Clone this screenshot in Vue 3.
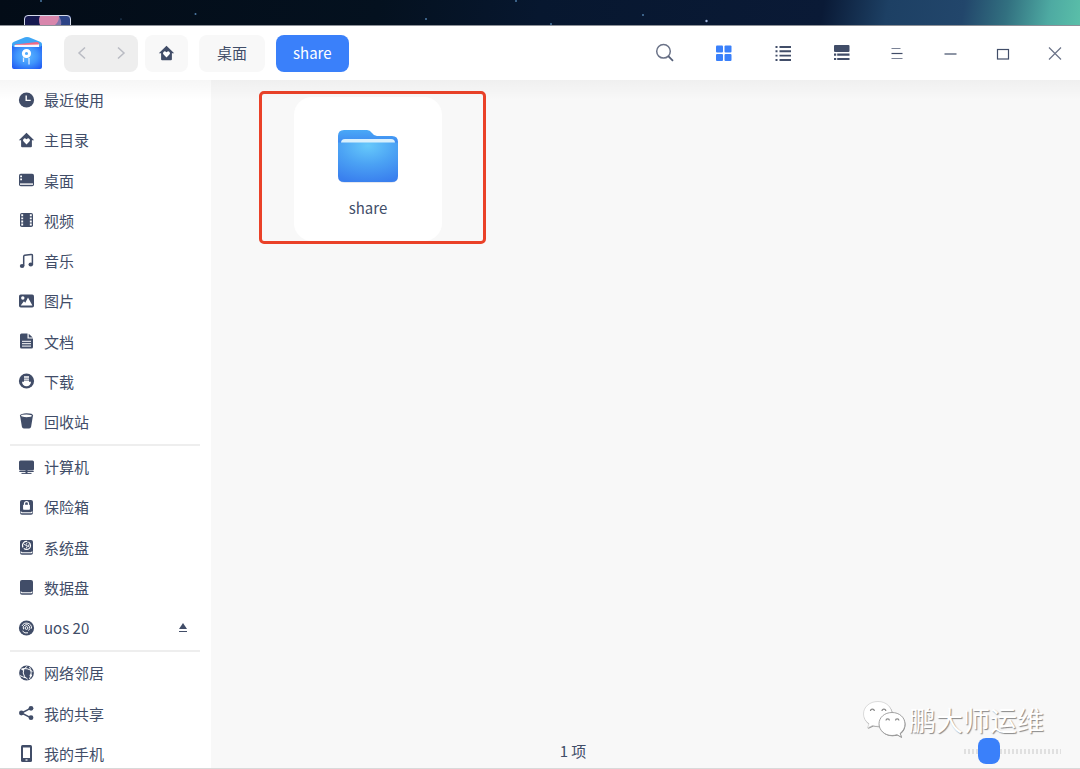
<script setup>
import { ref } from 'vue'

const zoomLevel = ref(19)

const places = [
  { icon: 'clock', label: '最近使用' },
  { icon: 'home', label: '主目录' },
  { icon: 'desktop', label: '桌面' },
  { icon: 'video', label: '视频' },
  { icon: 'music', label: '音乐' },
  { icon: 'picture', label: '图片' },
  { icon: 'document', label: '文档' },
  { icon: 'download', label: '下载' },
  { icon: 'trash', label: '回收站' },
  { separator: true },
  { icon: 'computer', label: '计算机' },
  { icon: 'vault', label: '保险箱' },
  { icon: 'system', label: '系统盘' },
  { icon: 'disk', label: '数据盘' },
  { icon: 'disc', label: 'uos 20', eject: true },
  { separator: true },
  { icon: 'network', label: '网络邻居' },
  { icon: 'share', label: '我的共享' },
  { icon: 'phone', label: '我的手机' },
]

const d = '#414d68'
const homeArt = `<path fill="${d}" d="M8.500 .8 16.200 8.200h-2.300v6a1 1 0 0 1-1 1H4.100a1 1 0 0 1-1-1v-6H.8z"/><path fill="#fff" d="M8.500 12.400 5.600 9.500a1.800 1.800 0 0 1 2.500-2.600l.4.400.4-.4a1.800 1.800 0 0 1 2.500 2.600z"/>`
const diskBase = `<rect x="2" y="1" width="13" height="14.700" rx="2" fill="${d}"/><path d="M3 12.500v.3a1 1 0 0 0 1 1h9a1 1 0 0 0 1-1v-.3" fill="none" stroke="#fff" stroke-width="1.100"/>`

const art = {
  clock: `<circle cx="8.500" cy="8" r="7.600" fill="${d}"/><path d="M8.200 3.400v5h4.500" fill="none" stroke="#fff" stroke-width="1.400"/>`,
  home: homeArt,
  desktop: `<rect x="1" y="1.700" width="15" height="12.600" rx="1.800" fill="${d}"/><path d="M2 12.100h13" stroke="#fff" stroke-width="1.400"/><path d="M2.200 4.400h1.800M2.200 7.400h1.800" stroke="#fff" stroke-width="1.600"/>`,
  video: `<rect x="2" y="1" width="13" height="14" rx="1.800" fill="${d}"/><path d="M4.200 2.300v12M12.800 2.300v12" stroke="#fff" stroke-width="1.900" stroke-dasharray="1.900 1.200"/>`,
  music: `<ellipse cx="4.100" cy="13" rx="2.300" ry="2" fill="${d}"/><ellipse cx="12.800" cy="11.500" rx="2.300" ry="2" fill="${d}"/><path d="M5.700 13V3.500q0-1 1-1.200l6.300-.8q1.400-.1 1.400 1v9" fill="none" stroke="${d}" stroke-width="1.500"/>`,
  picture: `<rect x="1" y="1.500" width="15" height="13" rx="1.800" fill="${d}"/><circle cx="4.800" cy="5" r="1.700" fill="#fff"/><path fill="#fff" d="m2.700 12.400 3.200-4.200 1.400 1.500 2.700-5.200L14.400 12.400z"/>`,
  document: `<path fill="${d}" d="M3.500 .6h6v4.900H15v8.400a1.500 1.500 0 0 1-1.500 1.500h-10A1.500 1.500 0 0 1 2 13.900V2.100A1.500 1.500 0 0 1 3.500 .6zM10.700 .8l4 3.700h-4z"/><path d="M4 8.300h9M4 10.700h9M4 13.100h9" stroke="#fff" stroke-width="1"/>`,
  download: `<circle cx="8.500" cy="8" r="7.600" fill="${d}"/><path d="M6 4h5M6 6.200h5" stroke="#fff" stroke-width="1.300"/><path fill="#fff" d="M6 7.600h5v1.200h2a4.500 4.500 0 0 1-9 0h2z"/>`,
  trash: `<ellipse cx="8.500" cy="2.800" rx="6.100" ry="1.900" fill="none" stroke="${d}" stroke-width="1.100"/><path fill="${d}" d="M2.200 3.600Q8.500 6.500 14.800 3.600l-1.700 10.200q-.3 1.700-2 1.700H5.900q-1.700 0-2-1.700z"/>`,
  computer: `<rect x="1" y="1.500" width="15" height="10" rx="1.500" fill="${d}"/><path d="M1.300 12.500h14.400M3.500 14.400h10" stroke="${d}" stroke-width="1"/><path d="M7.500 11h2v3.500h-2z" fill="${d}"/>`,
  vault: diskBase + `<path d="M5.700 6.300v3.800h5.600V6.300z" fill="#fff" stroke="#fff" stroke-width="1.200" stroke-linejoin="round"/><path d="M6.500 6.300V4.700a2 2 0 0 1 4 0v1.600" fill="none" stroke="#fff" stroke-width="1.200"/>`,
  system: diskBase + `<circle cx="8.500" cy="6.400" r="4" fill="none" stroke="#fff" stroke-width="1.200" stroke-dasharray="9 1.200"/><path d="M9.300 3.600 7.500 6.300l2 .5-1.400 2.700M5.800 4.700l1 1.200M11 5.300l-.7 2.700" fill="none" stroke="#fff" stroke-width=".9"/>`,
  disk: diskBase,
  disc: `<circle cx="8.500" cy="8" r="7.600" fill="${d}"/><circle cx="8.500" cy="8" r="1.400" fill="none" stroke="#fff" stroke-width="1"/><path d="M4 6A5 5 0 0 1 13.500 8.500M5.500 9.300a3.300 3.300 0 1 1 5 1.300M4.500 11a4.900 4.900 0 0 0 5.500 1.800" fill="none" stroke="#fff" stroke-width="1"/>`,
  network: `<circle cx="8.500" cy="8" r="7.400" fill="${d}"/><path d="M9.300 1.200Q4.500 3.600 5.200 8t4.500 6.200M3 4.200q6.700-2 11.500 2.500M11.500 2q3.300 5.300 0 12M1.800 10.600q3.200 1.200 5.700 2.400" fill="none" stroke="#fff" stroke-width="1"/><circle cx="5" cy="4.500" r="1.100" fill="#fff"/><circle cx="12.800" cy="10.500" r="1.200" fill="#fff"/>`,
  share: `<path d="M13 3.200 3.500 8l9.500 4.800" fill="none" stroke="${d}" stroke-width="1.500"/><circle cx="13" cy="3.300" r="2.400" fill="${d}"/><circle cx="3.400" cy="8" r="2.400" fill="${d}"/><circle cx="13" cy="12.700" r="2.400" fill="${d}"/>`,
  phone: `<rect x="3" y="0" width="11" height="17" rx="1.500" fill="${d}"/><rect x="5" y="2.500" width="7" height="10.500" fill="#fff"/><path d="M7.500 15h2" stroke="#fff" stroke-width="1.200"/>`,
}

const views = [
  { label: '搜索', art: `<circle cx="8.500" cy="8.300" r="6.800" fill="none" stroke="#6b7388" stroke-width="1.500"/><path d="m13.300 13.200 4.700 4.600" stroke="#555f78" stroke-width="1.800"/>` },
  { label: '图标视图', art: `<g fill="#3a80fa"><rect x="2" y="2.500" width="7" height="7" rx="1"/><rect x="10.500" y="2.500" width="7" height="7" rx="1"/><rect x="2" y="11" width="7" height="7" rx="1"/><rect x="10.500" y="11" width="7" height="7" rx="1"/></g>` },
  { label: '列表视图', art: `<path d="M2.500 4h2M6.500 4h11.500M2.500 8.300h2M6.500 8.300h11.500M2.500 12.600h2M6.500 12.600h11.500M2.500 17h2M6.500 17h11.500" stroke="${d}" stroke-width="1.900"/>` },
  { label: '分栏视图', art: `<rect x="2" y="2" width="15.500" height="7" rx="1" fill="${d}"/><path d="M2 11.700h2.200M5.200 11.700h12.300M2 16h2.200M5.200 16h12.300" stroke="${d}" stroke-width="2.200"/>` },
]

const controls = [
  { label: '菜单', art: `<path d="M3.500 5.500h9M3.500 15.500h11" stroke="#7a8296" stroke-width="1.200"/><path d="M3.500 10.500h11" stroke="${d}" stroke-width="1.200"/>` },
  { label: '最小化', art: `<path d="M4.500 11h12" stroke="${d}" stroke-width="1.200"/>` },
  { label: '最大化', art: `<rect x="5.500" y="6.500" width="11" height="9.500" fill="none" stroke="${d}" stroke-width="1.200"/>` },
  { label: '关闭', art: `<path d="m5 4.500 12 12M17 4.500l-12 12" stroke="#6b7388" stroke-width="1.200"/>` },
]
</script>

<template>
  <div class="screen">
    <div class="wallpaper">
      <svg class="stars" width="720" height="25" viewBox="0 0 720 25" aria-hidden="true">
        <g fill="#4d7aa5">
          <circle cx="41" cy="1" r="1" /><circle cx="195.500" cy="14" r="1" /><circle cx="121" cy="19" r=".6" />
          <circle cx="426" cy="19" r="1" /><circle cx="516" cy="1" r="1" /><circle cx="551" cy="24" r="1" />
          <circle cx="643" cy="15" r="1" /><circle cx="706.500" cy="21" r="1.200" fill="#a0b5dd" />
        </g>
      </svg>
      <svg class="thumb" width="47" height="10" viewBox="0 0 47 10" aria-hidden="true">
        <path d="M0 10V4a4 4 0 0 1 4-4h39a4 4 0 0 1 4 4v6z" fill="#16194f" />
        <path d="M30 0h13a4 4 0 0 1 4 4v6H30z" fill="#2c4386" />
        <path d="M30 1h5q3 5 2 9h-7z" fill="#8277ad" />
        <path d="M16 1h19q0 6-4 9H16q-2-5 0-9z" fill="#d886ac" />
        <path d="M.5 10V4A3.500 3.500 0 0 1 4 .5h39A3.500 3.500 0 0 1 46.500 4v6" fill="none" stroke="#d5dbea" />
      </svg>
    </div>

    <header class="titlebar">
      <svg class="logo" width="32" height="34" viewBox="0 0 32 34" aria-hidden="true">
        <defs>
          <radialGradient id="bag" cx=".5" cy=".45" r=".7">
            <stop offset="0" stop-color="#5cb8ff" /><stop offset=".5" stop-color="#4096fc" /><stop offset="1" stop-color="#1f58f2" />
          </radialGradient>
        </defs>
        <path d="M1 12V8q0-1.500 2-2.300L14 1.300q2-.7 4 0L29 5.700Q31 6.500 31 8v4z" fill="#3fa6f6" />
        <path d="m4 8.500 22-2.500q2 0 2.500 3L4 11z" fill="#f16a86" />
        <path d="M1 9.500 3 11h26l2-1.500V31a2 2 0 0 1-2 2H3a2 2 0 0 1-2-2z" fill="url(#bag)" />
        <path d="m3.500 9 24.500-1v3H3.500z" fill="#f6f8ff" />
        <path d="m6 8.800 20-2 2 1.700z" fill="#f16a86" />
        <circle cx="15.500" cy="17.500" r="3.100" fill="none" stroke="#fff" stroke-width="3" />
        <path d="M12.500 21.500v4.500M18 22v6.500" stroke="#dcecff" stroke-width="1.300" />
      </svg>
      <div class="history">
        <button type="button" aria-label="后退">
          <svg width="20" height="20" viewBox="0 0 20 20"><path d="m12 4.500-6 5.500 6 5.500" fill="none" stroke="#b9bbc3" stroke-width="1.500" /></svg>
        </button>
        <button type="button" aria-label="前进">
          <svg width="20" height="20" viewBox="0 0 20 20"><path d="m8 4.500 6 5.500-6 5.500" fill="none" stroke="#b9bbc3" stroke-width="1.500" /></svg>
        </button>
      </div>
      <nav class="crumbs" aria-label="路径">
        <button type="button" class="crumb home" aria-label="主目录"><svg width="17" height="17" viewBox="0 0 17 17" v-html="art.home" /></button>
        <button type="button" class="crumb">桌面</button>
        <button type="button" class="crumb current">share</button>
      </nav>
      <div class="views">
        <button v-for="v in views" :key="v.label" type="button" :aria-label="v.label">
          <svg width="20" height="20" viewBox="0 0 20 20" v-html="v.art" />
        </button>
      </div>
      <div class="controls">
        <button v-for="c in controls" :key="c.label" type="button" :aria-label="c.label">
          <svg width="20" height="20" viewBox="0 0 20 20" v-html="c.art" />
        </button>
      </div>
    </header>

    <div class="body">
      <aside class="sidebar">
        <ul>
          <template v-for="(p, i) in places" :key="i">
            <li v-if="p.separator" class="separator" role="separator"></li>
            <li v-else class="place">
              <a href="#">
                <svg width="17" height="17" viewBox="0 0 17 17" aria-hidden="true" v-html="art[p.icon]" />
                <span>{{ p.label }}</span>
              </a>
              <button v-if="p.eject" type="button" class="eject" aria-label="弹出">
                <svg width="10" height="10" viewBox="0 0 10 10"><path d="M5 0 9 6H1z" fill="#414d68" /><path d="M1 8.500h8" stroke="#414d68" /></svg>
              </button>
            </li>
          </template>
        </ul>
      </aside>

      <main class="content">
        <div class="files">
          <div class="highlight">
            <button type="button" class="file">
              <svg width="62" height="56" viewBox="0 0 62 56" aria-hidden="true">
                <defs>
                  <radialGradient id="front" cx=".5" cy=".08" r=".95">
                    <stop offset="0" stop-color="#66c9fb" /><stop offset=".5" stop-color="#4ba2f4" /><stop offset="1" stop-color="#397fee" />
                  </radialGradient>
                  <linearGradient id="back" x2="0" y2="1">
                    <stop offset="0" stop-color="#4aa9f7" /><stop offset=".4" stop-color="#3b80ee" />
                  </linearGradient>
                </defs>
                <path d="M1 46q0 8 7 8h46q7 0 7-8z" fill="#e4e7ee" />
                <path d="M1 7q0-6 6-6h23q3 0 5 3t5 3h15q6 0 6 6v30H1z" fill="url(#back)" />
                <path d="M4 14q0-4 4-4h46q4 0 4 4z" fill="#d8f0fd" />
                <path d="M1 13.500h60V47q0 6-6 6H7q-6 0-6-6z" fill="url(#front)" />
              </svg>
              <span>share</span>
            </button>
          </div>
        </div>
        <footer class="status">
          <p>1 项</p>
          <input v-model="zoomLevel" type="range" min="0" max="100" aria-label="图标大小" />
        </footer>
      </main>
    </div>

    <div class="watermark">
      <svg width="44" height="40" viewBox="0 0 44 40" aria-hidden="true">
        <g fill="#999">
          <path d="M16.500 2.500C8.500 2.500 2 8 2 15c0 4 2 7.500 5.500 9.700L6 29l5.500-2.500q3 1 7 .8C25.500 27 31 21.500 31 15S25 2.500 16.500 2.500z" />
        </g>
        <g fill="#fff" stroke="#c4c4c4" stroke-width=".6">
          <path d="M16 1.500C7.500 1.500 1.500 7 1.500 14c0 4 2 7.500 5.500 9.700L5.500 28l5-2.500q3 1 7 .8C25 26 30 20.500 30 14S24.500 1.500 16 1.500z" />
        </g>
        <path d="M30.500 13.300c-7.500 0-13 5-13 11.300S23 36.300 30.500 36.300q2.500 0 5-.8l4.500 2.600-1.300-4C42 31.800 43.500 28.300 43.500 24.800c0-6.500-5.500-11.500-13-11.500z" fill="#888" />
        <path d="M30 12.500c-7.500 0-13 5-13 11.300S22.500 35.500 30 35.500q2.500 0 5-.8l4.500 2.600-1.300-4C41.500 31 43 27.500 43 24c0-6.500-5.500-11.500-13-11.500z" fill="#fff" stroke="#999" stroke-width=".9" />
        <g fill="none" stroke="#888" stroke-width="1.200">
          <path d="M8.500 11a1.900 1.900 0 0 1 3.800 0M20 11a1.900 1.900 0 0 1 3.800 0M24 20.500a1.700 1.700 0 0 1 3.400 0M33.500 20.500a1.700 1.700 0 0 1 3.400 0" />
        </g>
      </svg>
      <span>鹏大师运维</span>
    </div>
  </div>
</template>

<style>
body {
  margin: 0;
}
</style>

<style scoped>
.screen {
  position: relative;
  display: flex;
  flex-direction: column;
  height: 100vh;
  overflow: hidden;
  background: #f8f8f8;
  color: #414d68;
  font: 15px/22px "Noto Sans CJK SC", "Noto Sans", sans-serif;
}
button {
  display: flex;
  align-items: center;
  justify-content: center;
  padding: 0;
  border: 0;
  background: none;
  color: inherit;
  font: inherit;
}
.wallpaper {
  position: relative;
  flex: none;
  height: 25px;
  overflow: hidden;
  border-bottom: 1px solid #8d9198;
  background: linear-gradient(100deg, #030c17 0%, #04111f 35%, #07172f 50%, #0a1a36 76%, #1d4064 82%, #22466b 89%, #327080 93%, #4eaaa2 97%, #5abfa9 100%);
}
.stars {
  display: block;
}
.thumb {
  position: absolute;
  left: 24px;
  bottom: 0;
}
.titlebar {
  display: flex;
  flex: none;
  align-items: center;
  height: 54px;
  background: #fff;
}
.logo {
  margin: 0 21px 0 11px;
}
.history {
  display: flex;
  height: 37px;
  border-radius: 8px;
  background: #eee;
}
.history button {
  width: 37px;
}
.crumbs {
  display: flex;
  gap: 11px;
  margin-left: 7px;
}
.crumb {
  height: 37px;
  padding: 0 18px;
  border-radius: 8px;
  background: #f8f8f8;
}
.crumb.home {
  padding: 0 13px;
}
.crumb.current {
  padding: 0 17px;
  background: #3a80fa;
  color: #fff;
}
.views {
  display: flex;
  margin: 0 1px 0 auto;
}
.views button {
  width: 59px;
  height: 54px;
}
.controls {
  display: flex;
}
.controls button {
  width: 52px;
  height: 54px;
}
.body {
  position: relative;
  display: flex;
  flex: 1;
  min-height: 0;
  border-bottom: 1px solid #d9d9d9;
}
.body::before {
  content: "";
  position: absolute;
  inset: 0 0 auto;
  height: 20px;
  background: linear-gradient(rgba(0, 0, 0, 0.035), transparent);
  pointer-events: none;
}
.sidebar {
  width: 211px;
  flex: none;
  overflow: hidden;
  background: #fff;
}
.sidebar ul {
  display: flex;
  flex-direction: column;
  height: calc(100% + 6px);
  margin: 0;
  padding: 0;
  list-style: none;
}
.place {
  display: flex;
  flex: 1;
  align-items: center;
  justify-content: space-between;
  padding: 0 23px 0 18px;
}
.place a {
  display: flex;
  align-items: center;
  gap: 9px;
  color: inherit;
  text-decoration: none;
}
.separator {
  flex: none;
  height: 2px;
  margin: 2px 11px 1px 10px;
  background: #eee;
}
.content {
  display: flex;
  flex: 1;
  flex-direction: column;
  min-width: 0;
}
.files {
  flex: 1;
  padding: 11px 48px;
}
.highlight {
  box-sizing: border-box;
  width: 227px;
  padding: 3px 32px 0;
  border: 3px solid #ea4128;
  border-radius: 5px;
}
.file {
  flex-direction: column;
  gap: 12px;
  width: 148px;
  height: 144px;
  padding-top: 10px;
  border-radius: 18px;
  background: #fff;
}
.status {
  display: flex;
  align-items: center;
  height: 34px;
  padding-right: 19px;
}
.status p {
  flex: 1;
  margin: 0;
  text-align: center;
}
.status input {
  width: 97px;
  height: 26px;
  margin: 0 0 0 29px;
  appearance: none;
  background: repeating-linear-gradient(90deg, #e0e0e0 0 2px, transparent 2px 4px) center / 100% 5px no-repeat;
}
.status input::-webkit-slider-thumb {
  appearance: none;
  width: 22px;
  height: 26px;
  border-radius: 8px;
  background: #3a80fa;
}
.watermark {
  position: absolute;
  right: 36px;
  bottom: 29px;
  display: flex;
  align-items: center;
  gap: 3px;
  color: #fff;
  font-size: 27px;
  line-height: 40px;
  text-shadow: 1px 1px 1px #888;
  pointer-events: none;
}
</style>
